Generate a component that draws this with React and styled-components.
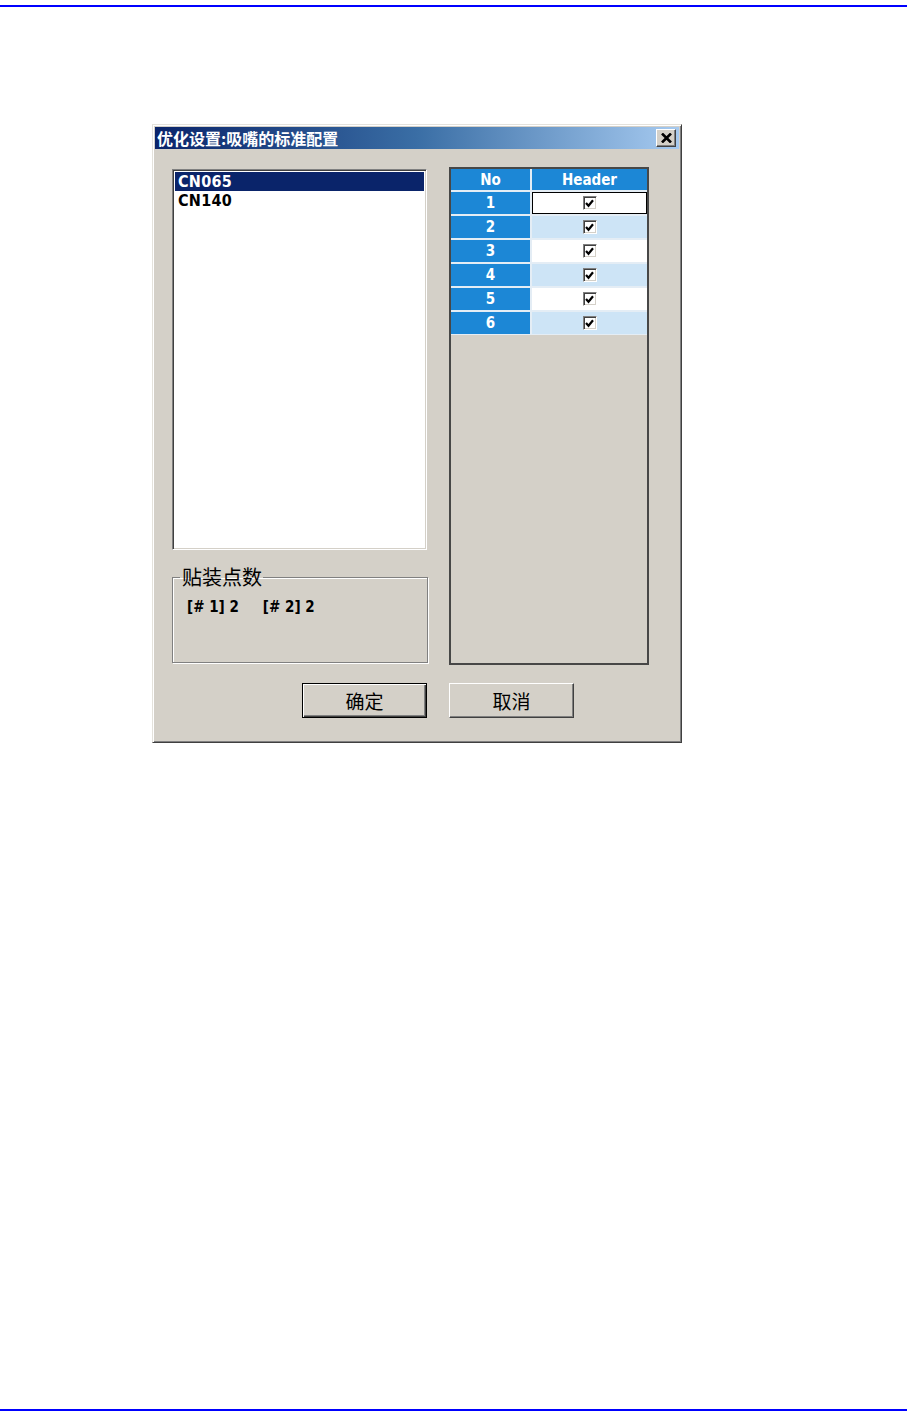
import React from 'react';
import styled, { createGlobalStyle } from 'styled-components';

const GlobalStyle = createGlobalStyle`
  html, body {
    margin: 0;
    padding: 0;
    background: #ffffff;
  }
  body {
    font-family: 'Liberation Sans', 'Noto Sans CJK SC', sans-serif;
  }
`;

const nozzles = ['CN065', 'CN140'];
const heads = [1, 2, 3, 4, 5, 6];
const counts = [
  { head: 1, value: 2 },
  { head: 2, value: 2 },
];

function CheckBox() {
  return (
    <Check>
      <svg width="9" height="9" viewBox="0 0 9 9">
        <path d="M1 4 L3.5 6.8 L8 1.2" fill="none" stroke="#000" strokeWidth="2.2" />
      </svg>
    </Check>
  );
}

export default function App() {
  return (
    <>
      <GlobalStyle />
      <Page>
        <Rule />
        <Dialog>
          <TitleBar>
            <Title>优化设置:吸嘴的标准配置</Title>
            <CloseButton>
              <svg width="11" height="10" viewBox="0 0 11 10">
                <path d="M1 0.5 L10 9.5 M10 0.5 L1 9.5" stroke="#000" strokeWidth="2.6" />
              </svg>
            </CloseButton>
          </TitleBar>
          <Body>
            <MainRow>
              <LeftColumn>
                <ListBox>
                  {nozzles.map((n, i) => (
                    <ListItem key={n} selected={i === 0}>
                      {n}
                    </ListItem>
                  ))}
                </ListBox>
                <Group>
                  <Legend>贴装点数</Legend>
                  <CountRow>
                    {counts.map(c => (
                      <span key={c.head}>
                        [# {c.head}] {c.value}
                      </span>
                    ))}
                  </CountRow>
                </Group>
              </LeftColumn>
              <Table>
                <Grid>
                  <HeadCell>No</HeadCell>
                  <HeadCell>Header</HeadCell>
                  {heads.map(h => (
                    <React.Fragment key={h}>
                      <NoCell>{h}</NoCell>
                      <ValueCell alt={h % 2 === 0} focused={h === 1}>
                        <CheckBox />
                      </ValueCell>
                    </React.Fragment>
                  ))}
                </Grid>
              </Table>
            </MainRow>
            <ButtonRow>
              <Button primary>确定</Button>
              <Button>取消</Button>
            </ButtonRow>
          </Body>
        </Dialog>
        <Rule bottom />
      </Page>
    </>
  );
}

const Page = styled.div`
  display: flex;
  flex-direction: column;
  min-height: 1421px;
  box-sizing: border-box;
  padding-bottom: 10px;
`;

const Rule = styled.div`
  height: 2px;
  background: #0000ff;
  margin-top: ${p => (p.bottom ? 'auto' : '5px')};
`;

const Dialog = styled.div`
  margin: 117px 0 0 152px;
  width: 530px;
  height: 619px;
  box-sizing: border-box;
  background: #d4d0c8;
  border: 1px solid;
  border-color: #e4e2dc #404040 #404040 #e4e2dc;
  box-shadow: inset 1px 1px 0 #ffffff, inset -1px -1px 0 #808080;
  padding: 2px;
  display: flex;
  flex-direction: column;
`;

const TitleBar = styled.div`
  height: 22px;
  background: linear-gradient(to right, #0a246a 0%, #3a6ea5 50%, #a6caf0 100%);
  display: flex;
  align-items: center;
  justify-content: space-between;
  padding: 0 3px 0 2px;
`;

const Title = styled.div`
  color: #ffffff;
  font-family: 'Noto Sans CJK SC', sans-serif;
  font-weight: 700;
  font-size: 16px;
  line-height: 22px;
`;

const CloseButton = styled.div`
  width: 20px;
  height: 18px;
  box-sizing: border-box;
  background: #d4d0c8;
  border: 1px solid;
  border-color: #ffffff #404040 #404040 #ffffff;
  box-shadow: inset -1px -1px 0 #808080;
  display: flex;
  align-items: center;
  justify-content: center;
`;

const Body = styled.div`
  flex: 1;
  display: flex;
  flex-direction: column;
  padding: 18px 0 0 17px;
`;

const MainRow = styled.div`
  display: flex;
  gap: 21px;
  height: 498px;
`;

const LeftColumn = styled.div`
  width: 256px;
  display: flex;
  flex-direction: column;
`;

const ListBox = styled.div`
  margin-top: 2px;
  height: 381px;
  width: 255px;
  box-sizing: border-box;
  background: #ffffff;
  border: 1px solid;
  border-color: #808080 #ffffff #ffffff #808080;
  box-shadow: inset 1px 1px 0 #404040, inset -1px -1px 0 #d4d0c8;
  padding: 2px 2px;
`;

const ListItem = styled.div`
  height: 19px;
  line-height: 19px;
  padding-left: 3px;
  font-family: 'DejaVu Sans Condensed', 'Liberation Sans', sans-serif;
  font-weight: 700;
  font-size: 16px;
  letter-spacing: 0.3px;
  color: ${p => (p.selected ? '#ffffff' : '#000000')};
  background: ${p => (p.selected ? '#0a246a' : 'transparent')};
`;

const Group = styled.fieldset`
  margin: 16px 0 0 0;
  padding: 10px 0 0 6px;
  height: 97px;
  box-sizing: border-box;
  border: 1px solid #808080;
  box-shadow: inset 1px 1px 0 #ffffff, 1px 1px 0 #ffffff;
  min-width: 0;
`;

const Legend = styled.legend`
  margin-left: 1px;
  padding: 0 1px 0 2px;
  font-family: 'Noto Sans CJK SC', sans-serif;
  font-size: 20px;
  line-height: 22px;
  color: #000000;
`;

const CountRow = styled.div`
  display: flex;
  gap: 24px;
  padding-left: 8px;
  font-family: 'DejaVu Sans Condensed', 'Liberation Sans', sans-serif;
  font-weight: 700;
  font-size: 15px;
  color: #000000;
`;

const Table = styled.div`
  width: 200px;
  height: 498px;
  box-sizing: border-box;
  border: 2px solid #474747;
  background: #d4d0c8;
`;

const Grid = styled.div`
  display: grid;
  grid-template-columns: 79px 115px;
  grid-template-rows: 21px;
  grid-auto-rows: 22px;
  gap: 2px;
  background: #e4edf5;
  padding-bottom: 1px;
`;

const HeadCell = styled.div`
  background: #1c87d6;
  color: #ffffff;
  font-family: 'DejaVu Sans Condensed', 'Liberation Sans', sans-serif;
  font-weight: 700;
  font-size: 15px;
  display: flex;
  align-items: center;
  justify-content: center;
`;

const NoCell = styled(HeadCell)``;

const ValueCell = styled.div`
  background: ${p => (p.alt ? '#cde4f6' : '#ffffff')};
  border: ${p => (p.focused ? '1px solid #000000' : 'none')};
  display: flex;
  align-items: center;
  justify-content: center;
`;

const Check = styled.div`
  width: 14px;
  height: 14px;
  box-sizing: border-box;
  background: #ffffff;
  border: 1px solid;
  border-color: #808080 #ffffff #ffffff #808080;
  box-shadow: inset 1px 1px 0 #404040, inset -1px -1px 0 #d4d0c8;
  display: flex;
  align-items: center;
  justify-content: center;
`;

const ButtonRow = styled.div`
  display: flex;
  gap: 22px;
  margin: 18px 0 0 130px;
`;

const Button = styled.button`
  width: 125px;
  height: 35px;
  box-sizing: border-box;
  background: #d4d0c8;
  font-family: 'Noto Sans CJK SC', sans-serif;
  font-size: 19px;
  color: #000000;
  padding: 0;
  border: 1px solid;
  border-color: ${p => (p.primary ? '#000000' : '#ffffff #404040 #404040 #ffffff')};
  box-shadow: ${p =>
    p.primary
      ? 'inset 1px 1px 0 #ffffff, inset -1px -1px 0 #404040, inset -2px -2px 0 #808080'
      : 'inset -1px -1px 0 #808080'};
`;
